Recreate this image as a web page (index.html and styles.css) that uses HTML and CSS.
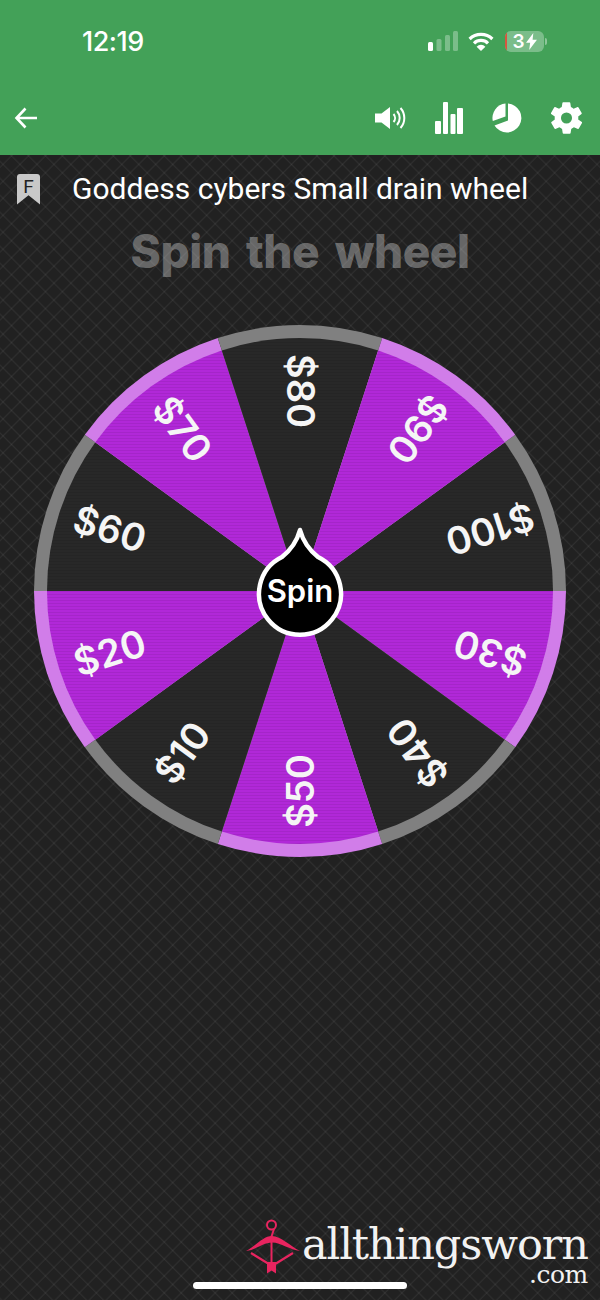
FILE: index.html
```html
<!DOCTYPE html>
<html lang="en">
<head>
<meta charset="utf-8">
<title>Spin the wheel</title>
<link rel="stylesheet" href="styles.css">
</head>
<body>
<div class="phone">
  <header class="appbar">
    <div class="status">
      <span class="clock">12:19</span>
      <div class="status-icons">
        <svg class="signal" viewBox="0 0 30 20" width="30" height="20"><rect x="0" y="11" width="5" height="9" rx="1.5" fill="#fff"/><rect x="8.500" y="8" width="5" height="12" rx="1.5" fill="#fff" opacity=".3"/><rect x="17" y="4" width="5" height="16" rx="1.5" fill="#fff" opacity=".3"/><rect x="25" y="0" width="5" height="20" rx="1.5" fill="#fff" opacity=".3"/></svg>
        <svg class="wifi" viewBox="0 0 26 19" width="26" height="19"><path d="M1.600 7a16.400 16.400 0 0 1 22.800 0" fill="none" stroke="#fff" stroke-width="3.200"/><path d="M6 11.300a10 10 0 0 1 14 0" fill="none" stroke="#fff" stroke-width="3.200"/><path d="M13 19l-4.400-4.300a6.200 6.200 0 0 1 8.800 0z" fill="#fff"/></svg>
        <div class="battery"><span class="battery-level"></span><span class="battery-text">3<svg class="bolt" viewBox="0 0 9 14" width="11" height="17"><path d="M6 0L0 8h3.400L2.600 14 9 5.600H5.400z" fill="#fff"/></svg></span></div><span class="battery-cap"></span>
      </div>
    </div>
    <div class="toolbar">
      <svg class="back" viewBox="0 0 24 24" width="24" height="24"><path d="M23 12H3M11.500 2.500L2.500 12l9 9.500" fill="none" stroke="#fff" stroke-width="2.600"/></svg>
      <div class="tools">
        <svg viewBox="0 0 31 24" width="31" height="24"><path d="M0 7.500h6.500L15 1v22l-8.500-6.500H0z" fill="#fff"/><path d="M18.500 8a6 6 0 0 1 0 8M22 5a10.500 10.500 0 0 1 0 14M25.500 2a15 15 0 0 1 0 20" fill="none" stroke="#fff" stroke-width="2"/></svg>
        <svg viewBox="0 0 28 32" width="28" height="32"><rect x="0" y="19" width="6" height="13" rx="1" fill="#fff"/><rect x="8" y="0" width="5" height="32" rx="1" fill="#fff"/><rect x="15.500" y="12" width="5" height="20" rx="1" fill="#fff"/><rect x="22" y="6" width="6" height="26" rx="1" fill="#fff"/></svg>
        <svg viewBox="0 0 30 30" width="30" height="30"><path d="M13.500.5A14.500 14.500 0 0 0 .8 18L13.500 13.500z" fill="#fff"/><path d="M16 .5A14.500 14.500 0 1 1 2.500 22.500L16 17.500z" fill="#fff"/></svg>
        <svg viewBox="2.200 1.900 19.600 20.200" width="31" height="32"><path d="M19.400 13a7.600 7.600 0 0 0 0-2l2.100-1.600a.5.5 0 0 0 .1-.6l-2-3.500a.5.5 0 0 0-.6-.2l-2.500 1a7.300 7.300 0 0 0-1.700-1l-.4-2.600a.5.5 0 0 0-.5-.4h-4a.5.5 0 0 0-.5.4l-.4 2.600a7.300 7.300 0 0 0-1.700 1l-2.500-1a.5.5 0 0 0-.6.2l-2 3.500a.5.5 0 0 0 .1.6L4.600 11a7.600 7.600 0 0 0 0 2l-2.100 1.600a.5.5 0 0 0-.1.6l2 3.500c.1.200.4.300.6.200l2.500-1c.5.400 1.100.700 1.700 1l.4 2.600c0 .2.300.4.500.4h4c.2 0 .5-.2.500-.4l.4-2.600c.6-.3 1.200-.6 1.700-1l2.500 1c.2.100.5 0 .6-.2l2-3.500a.5.5 0 0 0-.1-.6zM12 15.500a3.500 3.500 0 1 1 0-7 3.500 3.500 0 0 1 0 7z" fill="#fff"/></svg>
      </div>
    </div>
  </header>
  <main class="content">
    <div class="title-row">
      <div class="badge"><span>F</span></div>
      <h1 class="wheel-name">Goddess cybers Small drain wheel</h1>
    </div>
    <h2 class="spin-title">Spin the wheel</h2>
    <svg class="wheel" viewBox="0 0 600 580" width="600" height="580" id="wheel" xmlns="http://www.w3.org/2000/svg"></svg>
  </main>
  <div class="logo">
    <svg class="hanger" viewBox="0 0 54 56" width="54" height="56"><circle cx="25.500" cy="6" r="4.500" fill="none" stroke="#e8245f" stroke-width="2"/><path d="M28 10L25 19" stroke="#e8245f" stroke-width="2" fill="none"/><path d="M0 32C10 27 17 17 26 17C35 17 44 27 54 32C44 31 35 23.500 26 23.500C17 23.500 10 31 0 32Z" fill="#e8245f"/><path d="M5 34L26 47L47 34" stroke="#e8245f" stroke-width="2.200" fill="none"/><path d="M25.500 22V46" stroke="#e8245f" stroke-width="2" fill="none"/><path d="M21 43h9v11.500l-4.500-3-4.500 3z" fill="#e8245f"/></svg>
    <div class="logo-text">
      <span class="logo-main">allthingsworn</span>
      <span class="logo-com">.com</span>
    </div>
  </div>
  <div class="home"></div>
</div>
<script src="wheel.js"></script>
</body>
</html>
```
FILE: styles.css
```css
* { box-sizing: border-box; }
html, body { margin: 0; padding: 0; }
body { width: 600px; height: 1300px; overflow: hidden; font-family: "Roboto", sans-serif; background: #232323; }
.phone {
  position: relative; width: 600px; height: 1300px; overflow: hidden;
  background-color: #212121;
  background-image:
    repeating-linear-gradient(45deg, transparent 0, rgba(255,255,255,.06) 1px, transparent 2.500px, transparent 12px),
    repeating-linear-gradient(-45deg, transparent 0, rgba(255,255,255,.06) 1px, transparent 2.500px, transparent 12px);
}
.appbar { height: 155px; background: #43a158; display: flex; flex-direction: column; color: #fff; }
.status { display: flex; justify-content: space-between; align-items: center; height: 40px; margin-top: 21px; padding: 0 53px 0 82px; }
.clock { font: 500 27px "Inter", sans-serif; letter-spacing: -.5px; }
.status-icons { display: flex; align-items: center; }
.signal { margin-right: 10px; }
.wifi { margin-right: 11px; }
.battery { position: relative; width: 39px; height: 21px; border-radius: 6px; background: rgba(255,255,255,.3); overflow: hidden; }
.battery-level { position: absolute; left: 0; top: 0; bottom: 0; width: 2px; background: #d8563f; }
.battery-text { position: absolute; inset: 0; display: flex; align-items: center; justify-content: center; gap: 1px; font: 600 19px "Inter", sans-serif; color: #fff; }
.battery-cap { width: 2px; height: 7px; margin-left: 1px; border-radius: 0 2px 2px 0; background: rgba(255,255,255,.4); }
.toolbar { display: flex; align-items: center; justify-content: space-between; height: 50px; margin-top: 32px; padding: 0 18px 0 14px; }
.tools { display: flex; align-items: center; gap: 29px; }
.content { display: flex; flex-direction: column; }
.title-row { display: flex; align-items: center; height: 50px; padding: 18px 0 0 17px; gap: 32px; }
.badge { width: 23px; height: 31px; flex: none; background: #c8c8c8; border-radius: 3px 3px 0 0; clip-path: polygon(0 0, 100% 0, 100% 100%, 50% 70%, 0 100%); text-align: center; color: #222; font: 400 19px/26px "Roboto", sans-serif; }
.wheel-name { margin: 0; font: 400 30px/1 "Roboto", sans-serif; color: #fff; white-space: nowrap; }
.spin-title { margin: 24px 0 0; height: 44px; text-align: center; font: 800 46px/44px "Inter", sans-serif; color: rgba(255,255,255,.32); word-spacing: 6px; letter-spacing: -.5px; }
.wheel { display: block; margin-top: 18px; }
.wheel-label { font: 600 38px "Inter", sans-serif; fill: #f5f5f5; text-anchor: middle; }
.spin-label { font: 600 31px "Inter", sans-serif; fill: #fff; text-anchor: middle; }
.logo { position: absolute; left: 245px; top: 1218px; display: flex; align-items: flex-start; }
.hanger { margin-top: 1px; margin-left: 1px; }
.logo-text { display: flex; flex-direction: column; align-items: flex-end; margin-left: 2px; color: #f2f2f2; }
.logo-main { font: 400 43px/44px "DejaVu Serif", serif; letter-spacing: -1.1px; margin-top: 4px; white-space: nowrap; }
.logo-com { font: 400 25px/18px "DejaVu Serif", serif; letter-spacing: -.5px; }
.home { position: absolute; left: 193px; bottom: 11px; width: 214px; height: 7px; border-radius: 4px; background: #fff; }
```
FILE: wheel.js
```js
(function () {
  var NS = "http://www.w3.org/2000/svg";
  var svg = document.getElementById("wheel");
  var top = svg.getBoundingClientRect().top;
  var cx = 300, cy = 591 - top, R = 266, r = 253;
  var order = [
    ["$100", 0], ["$30", 1], ["$40", 0], ["$50", 1], ["$10", 0],
    ["$20", 1], ["$60", 0], ["$70", 1], ["$80", 0], ["$90", 1]
  ];
  function pt(rad, deg) {
    var a = deg * Math.PI / 180;
    return (cx + rad * Math.cos(a)).toFixed(2) + " " + (cy + rad * Math.sin(a)).toFixed(2);
  }
  function el(name, attrs, text, parent) {
    var n = document.createElementNS(NS, name);
    for (var k in attrs) n.setAttribute(k, attrs[k]);
    if (text) n.textContent = text;
    (parent || svg).appendChild(n);
    return n;
  }
  function sector(rad, a, b, fill) {
    el("path", { d: "M" + cx + " " + cy + "L" + pt(rad, a) + "A" + rad + " " + rad + " 0 0 1 " + pt(rad, b) + "Z", fill: fill });
  }
  var defs = el("defs", {});
  var pat = el("pattern", { id: "tex", width: 4, height: 3, patternUnits: "userSpaceOnUse" }, null, defs);
  el("rect", { x: 0, y: 0, width: 4, height: 1, fill: "#000", opacity: ".07" }, null, pat);
  order.forEach(function (s, i) {
    var a = -36 + i * 36, b = a + 36;
    sector(R, a, b, s[1] ? "#d17de9" : "#808080");
    sector(r, a, b, s[1] ? "#b128d8" : "#282828");
  });
  el("circle", { cx: cx, cy: cy, r: r, fill: "url(#tex)" });
  order.forEach(function (s, i) {
    var mid = -18 + i * 36;
    var m = mid * Math.PI / 180;
    var x = cx + 200 * Math.cos(m), y = cy + 200 * Math.sin(m);
    el("text", { "class": "wheel-label", y: 13.5, transform: "translate(" + x.toFixed(1) + " " + y.toFixed(1) + ") rotate(" + (mid + 180) + ")" }, s[0]);
  });
  var c = cy + 2;
  el("path", {
    d: "M300 " + (c - 63) + "C303 " + (c - 52) + " 308 " + (c - 44) + " 318 " + (c - 36) + "A41 41 0 1 1 282 " + (c - 36) + "C292 " + (c - 44) + " 297 " + (c - 52) + " 300 " + (c - 63) + "Z",
    fill: "#000", stroke: "#fff", "stroke-width": 4.5, "stroke-linejoin": "round"
  });
  el("text", { "class": "spin-label", x: cx, y: cy + 11 }, "Spin");
})();
```
